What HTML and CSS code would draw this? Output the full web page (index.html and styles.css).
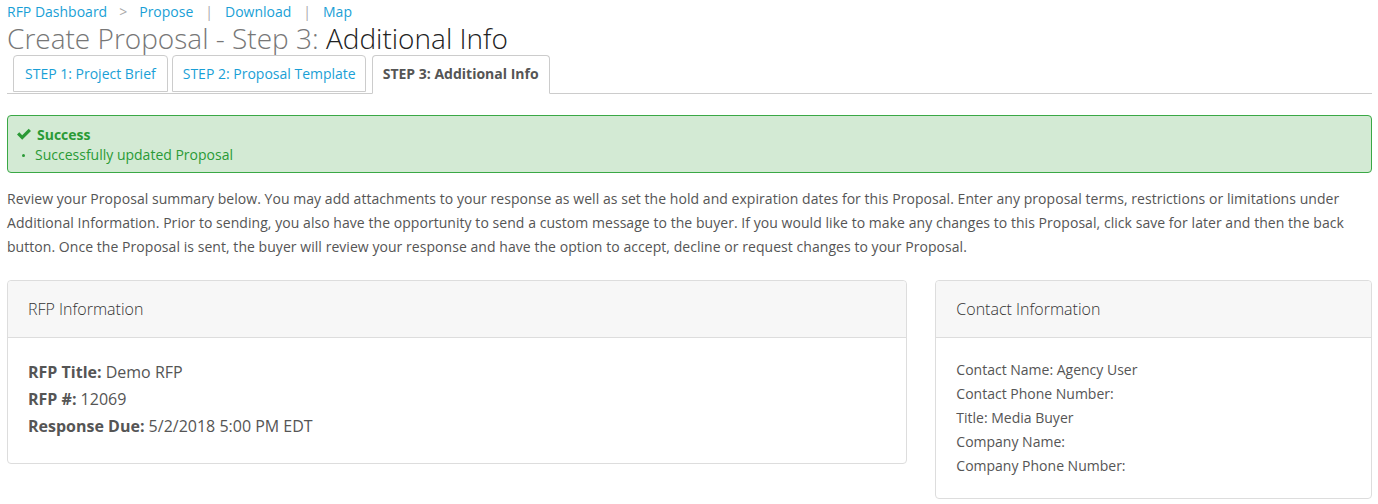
FILE: index.html
```html
<!DOCTYPE html>
<html>
<head>
<meta charset="utf-8">
<link rel="stylesheet" href="styles.css">
</head>
<body>
<div class="page">
  <nav class="crumbs">
    <a href="#">RFP Dashboard</a><span class="sep gt">&gt;</span><a href="#">Propose</a><span class="sep">|</span><a href="#">Download</a><span class="sep">|</span><a href="#">Map</a>
  </nav>
  <h1 class="title"><span class="muted">Create Proposal - Step 3: </span>Additional Info</h1>
  <ul class="tabs">
    <li class="tab first"><a href="#">STEP 1: Project Brief</a></li>
    <li class="tab second"><a href="#">STEP 2: Proposal Template</a></li>
    <li class="tab active"><a href="#">STEP 3: Additional Info</a></li>
  </ul>
  <div class="alert">
    <div class="alert-head"><svg class="check" viewBox="0 0 16 14" width="16" height="14"><path d="M1 7.6 L3.3 5.3 L6.2 8.2 L12.7 1.7 L15 4 L6.2 12.8 Z" fill="#2a9a36"/></svg><strong>Success</strong></div>
    <ul class="alert-list"><li>Successfully updated Proposal</li></ul>
  </div>
  <p class="intro">Review your Proposal summary below. You may add attachments to your response as well as set the hold and expiration dates for this Proposal. Enter any proposal terms, restrictions or limitations under Additional Information. Prior to sending, you also have the opportunity to send a custom message to the buyer. If you would like to make any changes to this Proposal, click save for later and then the back button. Once the Proposal is sent, the buyer will review your response and have the option to accept, decline or request changes to your Proposal.</p>
  <div class="row">
    <section class="panel panel-main">
      <div class="panel-head">RFP Information</div>
      <div class="panel-body rfp">
        <div><b>RFP Title:</b> Demo RFP</div>
        <div><b>RFP #:</b> 12069</div>
        <div><b>Response Due:</b> 5/2/2018 5:00 PM EDT</div>
      </div>
    </section>
    <section class="panel panel-side">
      <div class="panel-head">Contact Information</div>
      <div class="panel-body contact">
        <div>Contact Name: Agency User</div>
        <div>Contact Phone Number:</div>
        <div>Title: Media Buyer</div>
        <div>Company Name:</div>
        <div>Company Phone Number:</div>
      </div>
    </section>
  </div>
</div>
</body>
</html>
```

FILE: styles.css
```css
html, body { margin: 0; padding: 0; background: #fff; }
body { font-family: "Open Sans", "Liberation Sans", sans-serif; color: #555; font-size: 14px; }
.page { margin: 0 6px 0 7px; }
a { color: #1a9fd6; text-decoration: none; }
.crumbs { font-size: 14px; line-height: 18px; height: 22px; padding-top: 3px; box-sizing: border-box; }
.crumbs .sep { color: #aaa; margin: 0 12px 0 12px; }
.crumbs .sep.gt { margin: 0 12px 0 12px; }
.title { margin: 0; font-weight: 300; font-size: 28px; line-height: 32px; height: 33px; color: #222; }
.title .muted { color: #777; }
.tabs { list-style: none; margin: 0; padding: 0 0 0 6px; display: flex; gap: 4px; border-bottom: 1px solid #ccc; height: 38px; }
.tab { border: 1px solid #ccc; border-radius: 4px 4px 0 0; height: 37px; box-sizing: border-box; background: #fff; }
.tab a { display: block; padding: 0 10px; line-height: 36px; font-size: 14px; }
.tab.first a { padding: 0 11px 0 11px; }
.tab.second a { padding: 0 9px 0 10px; }
.tab.active { height: 39px; border-bottom-color: #fff; margin-left: 2px; }
.tab.active a { color: #555; font-weight: 700; }
.alert { margin-top: 21px; background: #d3ead4; border: 1px solid #3aa845; border-radius: 4px; height: 58px; box-sizing: border-box; padding: 9px 8px 0; color: #2a9a36; }
.alert-head { display: flex; align-items: center; gap: 5px; font-size: 14px; line-height: 19px; }
.alert-head strong { font-weight: 700; }
.check { margin-top: -1px; }
.alert-list { margin: 1px 0 0; padding: 0 0 0 19px; list-style: none; font-size: 14px; line-height: 19px; }
.alert-list li { position: relative; }
.alert-list li::before { content: ""; position: absolute; left: -13px; top: 9px; width: 3px; height: 3px; border-radius: 50%; background: #2a9a36; }
.intro { margin: 14px 0 0; font-size: 14px; line-height: 24px; color: #555; letter-spacing: 0.05px; }
.row { display: flex; gap: 28px; margin-top: 21px; align-items: flex-start; }
.panel { border: 1px solid #ddd; border-radius: 4px; box-sizing: border-box; background: #fff; }
.panel-main { width: 901px; height: 184px; }
.panel-side { width: 437px; height: 219px; }
.panel-head { background: #f7f7f7; border-bottom: 1px solid #ddd; height: 57px; box-sizing: border-box; padding: 0 20px; line-height: 56px; font-size: 16px; font-weight: 300; color: #333; border-radius: 4px 4px 0 0; }
.panel-body { padding: 0 20px; }
.rfp { padding-top: 21px; font-size: 16px; line-height: 27px; color: #555; }
.rfp b { font-weight: 700; }
.contact { padding-top: 20px; font-size: 14px; line-height: 24px; color: #555; }
```
